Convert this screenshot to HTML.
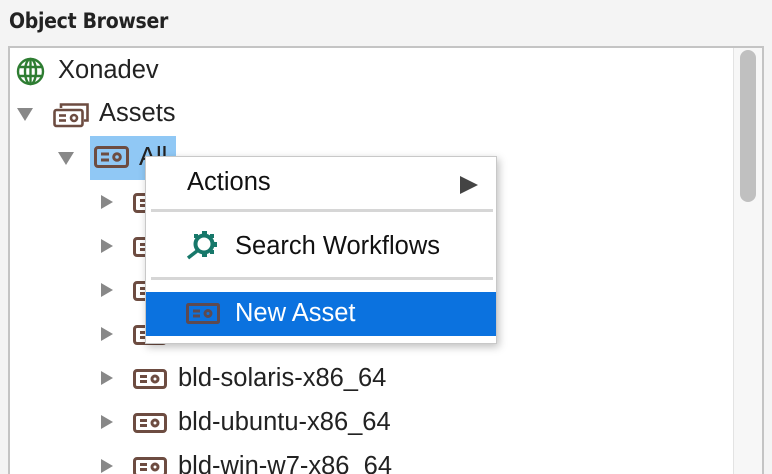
<!DOCTYPE html>
<html><head><style>
*{margin:0;padding:0;box-sizing:border-box}
html,body{width:772px;height:474px;overflow:hidden}
body{background:#f4f4f4;position:relative;font-family:"Liberation Sans",sans-serif;color:#222}
.abs{position:absolute}
.title{left:9px;top:9px;font-family:"DejaVu Sans Condensed","DejaVu Sans",sans-serif;font-weight:bold;font-size:21px;color:#222;letter-spacing:-0.3px}
.panel{left:8px;top:46px;width:756px;height:440px;background:#fff;border:2px solid #c4c4c4;border-bottom:none}
.sb{left:733px;top:48px;width:29px;height:430px;background:#f7f7f7;border-left:1px solid #e3e3e3}
.thumb{left:740px;top:50px;width:16px;height:152px;background:#c0c0c0;border-radius:8px}
.t{font-size:25.5px;line-height:28px;white-space:nowrap}
.tri{width:0;height:0;border-left:12px solid #888;border-top:7px solid transparent;border-bottom:7px solid transparent}
.trd{width:0;height:0;border-top:13px solid #888;border-left:8px solid transparent;border-right:8px solid transparent}
.menu{left:145px;top:156px;width:352px;height:188px;background:#fff;border:1px solid #c8c8c8;box-shadow:2px 3px 8px rgba(0,0,0,.25)}
.sep{height:3px;background:#d6d6d6;left:5px;width:342px}
</style></head><body>
<div class="abs title">Object Browser</div>
<div class="abs panel"></div>
<div class="abs sb"></div>
<div class="abs thumb"></div>

<svg class="abs" style="left:16px;top:57px" width="29" height="29" viewBox="0 0 29 29"><g fill="none" stroke="#2e7d32" stroke-width="2.4"><circle cx="14.5" cy="14.5" r="12.5"/><ellipse cx="14.5" cy="14.5" rx="5.5" ry="12.5"/><line x1="14.5" y1="2" x2="14.5" y2="27"/><line x1="2" y1="10" x2="27" y2="10"/><line x1="2" y1="19" x2="27" y2="19"/></g></svg>
<div class="abs t" style="left:58px;top:56px">Xonadev</div>

<div class="abs trd" style="left:17px;top:108px"></div>
<svg class="abs" style="left:53px;top:102px" width="37" height="26" viewBox="0 0 37 26"><g fill="none" stroke="#6d4c41" stroke-width="2.6"><path d="M8 6V2.5h26.5v16H31"/><rect x="1.5" y="8" width="28" height="16" rx="2"/><line x1="6" y1="13.5" x2="13" y2="13.5"/><line x1="6" y1="18.5" x2="13" y2="18.5"/><circle cx="21" cy="16" r="3"/></g></svg>
<div class="abs t" style="left:99px;top:99px">Assets</div>

<div class="abs" style="left:90px;top:136px;width:86px;height:44px;background:#90c8f5"></div>
<div class="abs trd" style="left:58px;top:152px"></div>
<svg class="abs" style="left:94px;top:146px" width="36" height="22" viewBox="0 0 36 22"><g fill="none" stroke="#6d4c41" stroke-width="3"><rect x="1.5" y="1.5" width="32" height="19" rx="2.5"/><line x1="7" y1="8" x2="15" y2="8"/><line x1="7" y1="14" x2="15" y2="14"/><circle cx="23" cy="11" r="3.3"/></g></svg>
<div class="abs t" style="left:139px;top:143px">All</div>

<div class="abs tri" style="left:101px;top:195px"></div>
<div class="abs tri" style="left:101px;top:239px"></div>
<div class="abs tri" style="left:101px;top:283px"></div>
<div class="abs tri" style="left:101px;top:327px"></div>
<div class="abs tri" style="left:101px;top:371px"></div>
<div class="abs tri" style="left:101px;top:415px"></div>
<div class="abs tri" style="left:101px;top:459px"></div>

<svg class="abs" style="left:133px;top:193px" width="34" height="20" viewBox="0 0 34 20"><g fill="none" stroke="#6d4c41" stroke-width="3"><rect x="1.5" y="1.5" width="31" height="17" rx="2.5"/><line x1="7" y1="7.5" x2="14" y2="7.5"/><line x1="7" y1="12.5" x2="14" y2="12.5"/><circle cx="22" cy="10" r="3"/></g></svg>
<svg class="abs" style="left:133px;top:237px" width="34" height="20" viewBox="0 0 34 20"><g fill="none" stroke="#6d4c41" stroke-width="3"><rect x="1.5" y="1.5" width="31" height="17" rx="2.5"/><line x1="7" y1="7.5" x2="14" y2="7.5"/><line x1="7" y1="12.5" x2="14" y2="12.5"/><circle cx="22" cy="10" r="3"/></g></svg>
<svg class="abs" style="left:133px;top:281px" width="34" height="20" viewBox="0 0 34 20"><g fill="none" stroke="#6d4c41" stroke-width="3"><rect x="1.5" y="1.5" width="31" height="17" rx="2.5"/><line x1="7" y1="7.5" x2="14" y2="7.5"/><line x1="7" y1="12.5" x2="14" y2="12.5"/><circle cx="22" cy="10" r="3"/></g></svg>
<svg class="abs" style="left:133px;top:325px" width="34" height="20" viewBox="0 0 34 20"><g fill="none" stroke="#6d4c41" stroke-width="3"><rect x="1.5" y="1.5" width="31" height="17" rx="2.5"/><line x1="7" y1="7.5" x2="14" y2="7.5"/><line x1="7" y1="12.5" x2="14" y2="12.5"/><circle cx="22" cy="10" r="3"/></g></svg>
<svg class="abs" style="left:133px;top:369px" width="34" height="20" viewBox="0 0 34 20"><g fill="none" stroke="#6d4c41" stroke-width="3"><rect x="1.5" y="1.5" width="31" height="17" rx="2.5"/><line x1="7" y1="7.5" x2="14" y2="7.5"/><line x1="7" y1="12.5" x2="14" y2="12.5"/><circle cx="22" cy="10" r="3"/></g></svg>
<svg class="abs" style="left:133px;top:413px" width="34" height="20" viewBox="0 0 34 20"><g fill="none" stroke="#6d4c41" stroke-width="3"><rect x="1.5" y="1.5" width="31" height="17" rx="2.5"/><line x1="7" y1="7.5" x2="14" y2="7.5"/><line x1="7" y1="12.5" x2="14" y2="12.5"/><circle cx="22" cy="10" r="3"/></g></svg>
<svg class="abs" style="left:133px;top:457px" width="34" height="20" viewBox="0 0 34 20"><g fill="none" stroke="#6d4c41" stroke-width="3"><rect x="1.5" y="1.5" width="31" height="17" rx="2.5"/><line x1="7" y1="7.5" x2="14" y2="7.5"/><line x1="7" y1="12.5" x2="14" y2="12.5"/><circle cx="22" cy="10" r="3"/></g></svg>

<div class="abs t" style="left:178px;top:364px">bld-solaris-x86_64</div>
<div class="abs t" style="left:178px;top:408px">bld-ubuntu-x86_64</div>
<div class="abs t" style="left:178px;top:452px">bld-win-w7-x86_64</div>

<div class="abs menu">
  <div class="abs t" style="left:41px;top:11px;color:#111">Actions</div>
  <div class="abs" style="left:314px;top:19px;width:0;height:0;border-left:18px solid #444;border-top:9px solid transparent;border-bottom:9px solid transparent"></div>
  <div class="abs sep" style="top:52px"></div>
  <svg class="abs" style="left:40px;top:74px" width="34" height="30" viewBox="0 0 34 30"><g fill="#17786a"><circle cx="18" cy="13" r="8.5" fill="none" stroke="#17786a" stroke-width="4"/><rect x="16" y="0" width="5" height="4"/><rect x="16" y="22" width="5" height="4"/><rect x="27" y="11" width="4" height="5"/><rect x="24" y="3" width="4" height="4"/><rect x="24" y="19" width="4" height="4"/><rect x="8" y="3" width="4" height="4"/><line x1="2" y1="27" x2="11" y2="20" stroke="#17786a" stroke-width="3.5"/></g></svg>
  <div class="abs t" style="left:89px;top:75px;color:#111">Search Workflows</div>
  <div class="abs sep" style="top:120px"></div>
  <div class="abs" style="left:0;top:135px;width:350px;height:44px;background:#0b72df"></div>
  <svg class="abs" style="left:40px;top:146px" width="34" height="22" viewBox="0 0 34 22"><g fill="none" stroke="#5e4a50" stroke-width="3"><rect x="1.5" y="1.5" width="31" height="18" rx="1"/><line x1="7" y1="8" x2="14" y2="8"/><line x1="7" y1="13" x2="14" y2="13"/><circle cx="22" cy="10.5" r="3"/></g></svg>
  <div class="abs t" style="left:89px;top:142px;color:#fff">New Asset</div>
</div>
</body></html>
